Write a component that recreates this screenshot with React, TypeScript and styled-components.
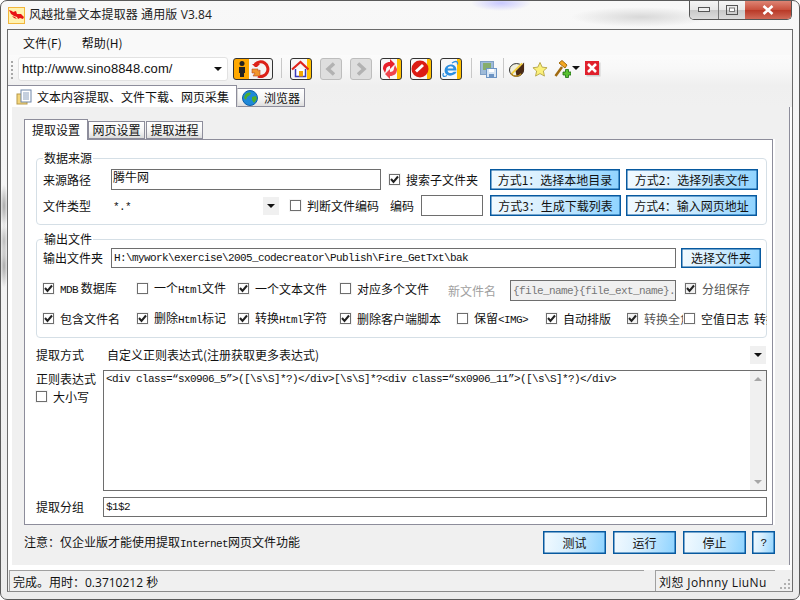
import React from 'react';
import styled, { createGlobalStyle } from 'styled-components';

const GlobalStyle = createGlobalStyle`
  html, body { margin: 0; padding: 0; background: #fff; overflow: hidden; }
  * { box-sizing: border-box; }
`;

const uiFont = `"Noto Sans CJK SC", sans-serif`;

const Win = styled.div`
  width: 800px;
  height: 600px;
  border: 1px solid #5a5a5a;
  border-radius: 7px;
  padding: 0 6px 7px 6px;
  display: flex;
  flex-direction: column;
  overflow: hidden;
  font: 12px/14px ${uiFont};
  color: #111;
  background:
    radial-gradient(ellipse 70px 10px at 640px 16px, #d8d8d8, transparent),
    radial-gradient(ellipse 30px 8px at 500px 2px, #c8c8ff, transparent),
    radial-gradient(ellipse 4px 22px at 3px 205px, #aaa, transparent),
    radial-gradient(ellipse 4px 18px at 3px 240px, #bbb, transparent),
    radial-gradient(ellipse 4px 22px at 3px 265px, #aaa, transparent),
    linear-gradient(#f8f8f8, #ececec);
`;

const TitleBar = styled.div`
  height: 28px;
  flex: none;
  display: flex;
  align-items: flex-start;
`;

const TitleText = styled.div`
  margin: 6px 0 0 4px;
  font-family: "Open Sans", ${uiFont};
  letter-spacing: 0.1px;
  color: #222;
  line-height: 16px;
`;

const WinControls = styled.div`
  margin-left: auto;
  display: flex;
  height: 20px;
  border: 1px solid #555;
  border-top: none;
  border-radius: 0 0 5px 5px;
  overflow: hidden;
  margin-top: -1px;
  margin-right: 1px;
`;

const WinBtn = styled.div<{ $w: number; $close?: boolean }>`
  width: ${(p) => p.$w}px;
  display: flex;
  align-items: center;
  justify-content: center;
  border-left: ${(p) => (p.$close ? 'none' : '1px solid #777')};
  background: ${(p) =>
    p.$close
      ? 'linear-gradient(#e08a7a, #c9523f 50%, #b93a28 55%, #d06a58)'
      : 'linear-gradient(#f6f6f6, #e8e8e8 50%, #c9c9c9 55%, #dcdcdc)'};
  &:first-child { border-left: none; }
`;

const Client = styled.div`
  flex: 1;
  min-height: 0;
  border: 1px solid #6b6b6b;
  border-bottom-color: #8a8a8a;
  background: #fff;
  display: flex;
  flex-direction: column;
`;

const MenuBar = styled.div`
  height: 25px;
  flex: none;
  display: flex;
  align-items: center;
  gap: 20px;
  padding: 1px 0 0 15px;
  background: #f9f9f9;
`;

const ToolBar = styled.div`
  height: 30px;
  flex: none;
  display: flex;
  align-items: flex-start;
  padding-top: 3px;
  background: linear-gradient(#fbfbfb, #f8f8f8 45%, #efefef);
`;

const Grip = styled.div`
  width: 2px;
  height: 20px;
  margin: 3px 5px 0 3px;
  background: repeating-linear-gradient(#a8a8a8 0 2px, transparent 2px 4px);
`;

const UrlBox = styled.div`
  width: 210px;
  height: 24px;
  margin-top: -1px;
  display: flex;
  align-items: center;
  justify-content: space-between;
  padding: 0 5px 0 3px;
  background: #fff;
  border: 1px solid #e2e2e2;
  border-radius: 3px;
  font: 13px/16px "Liberation Sans", sans-serif;
  letter-spacing: 0.1px;
  color: #111;
`;

const DownCaret = styled.i<{ $c?: string }>`
  display: block;
  flex: none;
  width: 0;
  height: 0;
  border-style: solid;
  border-color: ${(p) => p.$c ?? '#111'} transparent transparent transparent;
  border-width: 4px 4px 0 4px;
`;

const HammerCaret = styled(DownCaret)`
  margin: 0 0 2px 1px;
`;

const ToolBtn = styled.div<{ $w?: number; $ml: number; $off?: boolean; $bg?: string }>`
  width: ${(p) => p.$w ?? 22}px;
  height: 22px;
  margin-left: ${(p) => p.$ml}px;
  flex: none;
  display: flex;
  align-items: center;
  justify-content: center;
  border: 1px solid ${(p) => (p.$off ? '#bdbdbd' : '#333')};
  border-radius: 3px;
  background: ${(p) => p.$bg ?? (p.$off ? '#dedede' : 'linear-gradient(to left, #ffc000 4px, #f7f7f7 4px)')};
`;

const ToolSep = styled.div<{ $ml: number }>`
  width: 1px;
  height: 20px;
  margin-left: ${(p) => p.$ml}px;
  background: #c8c8c8;
  flex: none;
`;

const ToolIcon = styled.div<{ $ml: number; $w?: number }>`
  width: ${(p) => p.$w ?? 16}px;
  height: 22px;
  margin-left: ${(p) => p.$ml}px;
  flex: none;
  display: flex;
  align-items: center;
`;

const TabStrip = styled.div`
  height: 22px;
  flex: none;
  display: flex;
  align-items: flex-end;
  background: linear-gradient(#efefef, #f0f0f0);
  position: relative;
  z-index: 1;
`;

const MainTab = styled.div<{ $on?: boolean }>`
  display: flex;
  align-items: center;
  height: ${(p) => (p.$on ? 22 : 19)}px;
  padding: ${(p) => (p.$on ? '0 7px 0 8px' : '0 4px 0 4px')};
  gap: ${(p) => (p.$on ? 5 : 6)}px;
  border: 1px solid #8d8d9b;
  border-bottom: ${(p) => (p.$on ? 'none' : '1px solid #8d8d9b')};
  border-left: ${(p) => (p.$on ? 'none' : '1px solid #d8d8d8')};
  background: ${(p) => (p.$on ? '#fff' : 'linear-gradient(#fff, #f4f4f4 60%, #dedede)')};
  white-space: nowrap;
`;

const PageWrap = styled.div`
  flex: none;
  height: 459px;
  padding-left: 4px;
  padding-right: 2px;
  background: #fff;
`;

const MainPage = styled.div`
  height: 100%;
  padding: 12px 14px 0 12px;
  background: #f0f0f0;
  border-top: 1px solid #8d8d9b;
  border-right: 1px solid #8d8d9b;
  margin-top: -1px;
`;

const SubTabs = styled.div`
  display: flex;
  align-items: flex-end;
  height: 20px;
  position: relative;
  z-index: 1;
  margin-right: 2px;
`;

const SubTab = styled.div<{ $on?: boolean; $w: number }>`
  width: ${(p) => p.$w}px;
  height: ${(p) => (p.$on ? 21 : 18)}px;
  margin-bottom: ${(p) => (p.$on ? -1 : 0)}px;
  display: flex;
  align-items: center;
  justify-content: center;
  border: 1px solid #8d8d9b;
  border-bottom: ${(p) => (p.$on ? 'none' : '1px solid #8d8d9b')};
  background: ${(p) => (p.$on ? '#fff' : 'linear-gradient(#fff, #f4f4f4 60%, #dcdcdc)')};
  margin-right: ${(p) => (p.$on ? 0 : 1)}px;
`;

const SubPage = styled.div`
  height: 386px;
  margin-right: 2px;
  padding: 11px 5px 0 11px;
  background: #fff;
  border: 1px solid #8d8d9b;
  box-shadow: 2px 0 0 #fff;
`;

const Group = styled.fieldset<{ $mt?: number }>`
  margin: ${(p) => p.$mt ?? 0}px 0 0 0;
  padding: ${(p) => (p.$mt ? '2px 5px 8px 6px' : '4px 5px 8px 6px')};
  border: 1px solid #d5dfe6;
  border-radius: 4px;
  min-width: 0;
`;

const Legend = styled.legend`
  margin-left: 0;
  padding: 0 1px;
  line-height: 14px;
`;

const Row = styled.div<{ $h: number; $mt?: number; $top?: boolean }>`
  display: flex;
  height: ${(p) => p.$h}px;
  margin-top: ${(p) => p.$mt ?? 0}px;
  align-items: ${(p) => (p.$top ? 'flex-start' : 'center')};
  white-space: nowrap;
`;

const Label = styled.div<{ $w: number; $grey?: boolean; $mid?: boolean; $clip?: boolean }>`
  width: ${(p) => p.$w}px;
  flex: none;
  color: ${(p) => (p.$grey ? '#a0a0a0' : '#111')};
  align-self: ${(p) => (p.$mid ? 'center' : 'auto')};
  overflow: ${(p) => (p.$clip ? 'hidden' : 'visible')};
`;

const Field = styled.div<{ $w?: number; $grey?: boolean; $top?: boolean; $fill?: boolean }>`
  width: ${(p) => (p.$w ? `${p.$w}px` : 'auto')};
  height: 100%;
  flex: ${(p) => (p.$fill ? 1 : 'none')};
  display: flex;
  align-items: ${(p) => (p.$top ? 'flex-start' : 'center')};
  padding: ${(p) => (p.$top ? '0 1px' : '0 2px')};
  border: 1px solid #6e6e6e;
  background: ${(p) => (p.$grey ? '#f0f0f0' : '#fff')};
  color: ${(p) => (p.$grey ? '#777' : '#111')};
`;

const Mono = styled.span`
  font: 11px/14px "Liberation Mono", monospace;
  letter-spacing: -0.6px;
`;

const Check = styled.div<{ $w?: number; $ml?: number; $clip?: boolean }>`
  width: ${(p) => p.$w ?? 94}px;
  height: 17px;
  margin-left: ${(p) => p.$ml ?? 0}px;
  flex: none;
  display: flex;
  align-items: center;
  gap: 6px;
  overflow: ${(p) => (p.$clip ? 'hidden' : 'visible')};
`;

const Box = styled.span<{ $muted?: boolean }>`
  width: 11px;
  height: 11px;
  flex: none;
  display: flex;
  align-items: center;
  justify-content: center;
  border: 1px solid #6e6e6e;
  background: ${(p) => (p.$muted ? '#f2f2f2' : '#fff')};
  box-shadow: 0 0 0 1px #f4f4f4;
`;

const CheckText = styled.span<{ $grey?: boolean }>`
  color: ${(p) => (p.$grey ? '#555' : '#111')};
`;

const BlueBtn = styled.div<{ $w: number; $ml?: number; $h?: number }>`
  width: ${(p) => p.$w}px;
  height: ${(p) => p.$h ?? 21}px;
  margin-left: ${(p) => p.$ml ?? 0}px;
  flex: none;
  display: flex;
  align-items: center;
  justify-content: center;
  border: 1px solid #07599f;
  box-shadow: inset 0 0 0 0.5px #07599f;
  background: linear-gradient(100deg, #f2faff, #d8effe 40%, #8ed3ff);
  color: #111;
`;

const ComboArrow = styled.div`
  width: 16px;
  height: 18px;
  flex: none;
  display: flex;
  align-items: center;
  justify-content: center;
  background: #f0f0f0;
`;

const RegexRow = styled.div`
  display: flex;
  height: 121px;
  margin-top: 6px;
`;

const RegexSide = styled.div`
  width: 67px;
  flex: none;
  padding-top: 2px;
  display: flex;
  flex-direction: column;
  gap: 2px;
`;

const RegexBox = styled.div`
  flex: 1;
  display: flex;
  justify-content: space-between;
  border: 1px solid #6e6e6e;
  padding: 1px 0 0 2px;
  min-width: 0;
`;

const ScrollBar = styled.div`
  width: 16px;
  flex: none;
  margin-top: -1px;
  display: flex;
  flex-direction: column;
  justify-content: space-between;
  align-items: center;
  background: #f0f0f0;
  padding: 6px 0;
`;

const ScrollUp = styled.i`
  display: block;
  width: 0;
  height: 0;
  border-left: 4px solid transparent;
  border-right: 4px solid transparent;
  border-bottom: 4px solid #a6a6a6;
`;

const ScrollDown = styled(ScrollUp)`
  border-bottom: none;
  border-top: 4px solid #a6a6a6;
`;

const Footer = styled.div`
  display: flex;
  align-items: center;
  height: 23px;
  margin-top: 6px;
`;

const Note = styled.div`
  flex: 1;
`;

const StatusGap = styled.div`
  height: 4px;
  flex: none;
  background: #fff;
`;

const StatusBar = styled.div`
  flex: 1;
  display: flex;
  background: #f0f0f0;
  padding-left: 1px;
  font-family: "Open Sans", ${uiFont};
`;

const StatusCell = styled.div<{ $w: number; $ml?: number; $wide?: boolean }>`
  width: ${(p) => p.$w}px;
  margin-left: ${(p) => p.$ml ?? 0}px;
  flex: none;
  display: flex;
  align-items: center;
  padding: 3px 0 0 3px;
  border-top: 1px solid #a0a0a0;
  border-left: 1px solid #a0a0a0;
  white-space: nowrap;
  letter-spacing: ${(p) => (p.$wide ? 0.4 : 0)}px;
`;

const SizeGrip = styled.svg`
  margin: auto 1px 1px auto;
`;

const AppIconSvg = styled.svg`
  margin: 6px 0 0 1px;
  flex: none;
`;

const GlyphSvg = styled.svg<{ $mr?: number }>`
  margin-right: ${(p) => p.$mr ?? 0}px;
  flex: none;
`;

const Tick = () => (
  <svg width="9" height="9" viewBox="0 0 9 9">
    <path d="M1 4 L3.5 7 L8 1.5" fill="none" stroke="#222" strokeWidth="2" />
  </svg>
);

const CheckItem = ({ on, w, ml, muted, clip, children }: { on?: boolean; w?: number; ml?: number; muted?: boolean; clip?: boolean; children: React.ReactNode }) => (
  <Check $w={w} $ml={ml} $clip={clip}>
    <Box $muted={muted}>{on && <Tick />}</Box>
    <CheckText $grey={muted}>{children}</CheckText>
  </Check>
);

const AppIcon = () => (
  <AppIconSvg width="17" height="17" viewBox="0 0 17 17">
    <rect x="0.5" y="0.5" width="16" height="16" fill="#fff2b0" stroke="#f2b63c" />
    <path d="M1 3l3 1 1 1 3-1 1 3 4 0 3 3-1 2-3-1-2 1-1-2-3-1-3-2-1-2z" fill="#e81414" />
    <path d="M4 9l3 1 2 2-3-1z" fill="#e81414" />
  </AppIconSvg>
);

const PageIcon = () => (
  <svg width="16" height="16" viewBox="0 0 16 16">
    <rect x="1" y="5" width="10" height="10" fill="#f4d67c" stroke="#b89a4a" />
    <rect x="5" y="1" width="10" height="12" fill="#fff" stroke="#6f86a8" />
    <path d="M7 4h6M7 6h6M7 8h6M7 10h6" stroke="#8aa0be" />
  </svg>
);

const GlobeIcon = () => (
  <svg width="16" height="16" viewBox="0 0 16 16">
    <circle cx="8" cy="8" r="7.5" fill="#1e88d8" />
    <path d="M3 5c2-3 5-3 6-2l-1 2-3 2-1 3-2-2zM10 7l4-1 1 3-3 4-2-3z" fill="#4cae2c" />
    <circle cx="8" cy="8" r="7.5" fill="none" stroke="#0d5fa8" />
  </svg>
);

const Person = () => (
  <svg width="14" height="18" viewBox="0 0 14 18">
    <circle cx="7" cy="3.5" r="2.5" fill="#222" />
    <path d="M4 7h6v6H9v4H5v-4H4z" fill="#222" />
  </svg>
);

const Reload = () => (
  <svg width="22" height="20" viewBox="0 0 22 20">
    <path d="M6 5.500A7.300 7.300 0 1 1 9 17" fill="none" stroke="#dc2018" strokeWidth="3" />
    <path d="M3 5h8l-3 3H6z" fill="#dc2018" />
    <path d="M3 10h6v2l2-1v6H4l2-3H3z" fill="#f0962c" stroke="#b8481c" strokeWidth="0.600" />
  </svg>
);

const HomeGlyph = () => (
  <GlyphSvg $mr={3} width="18" height="18" viewBox="0 0 18 18">
    <path d="M4.500 9v7.500h10V9" fill="#fff" stroke="#3a3ab8" strokeWidth="1.500" />
    <rect x="8" y="11" width="4" height="5.500" fill="#f2a500" />
    <path d="M1 9.500l8.500-7.500 8 7.500" fill="none" stroke="#e0241c" strokeWidth="2.200" />
  </GlyphSvg>
);

const Chevron = ({ left }: { left?: boolean }) => (
  <svg width="12" height="14" viewBox="0 0 12 14">
    <path d={left ? 'M9 1.500L3 7l6 5.500' : 'M3 1.500L9 7l-6 5.500'} fill="none" stroke="#b2b2b2" strokeWidth="3.500" />
  </svg>
);

const RefreshGlyph = () => (
  <GlyphSvg $mr={3} width="18" height="20" viewBox="0 0 18 20">
    <path d="M2 10c0-5 3-7 7-7V0l5 5-5 5V7C7 7 5 8 5 11l-1 3z" fill="#e8202a" />
    <path d="M16 10c0 5-3 7-7 7v3l-5-5 5-5v3c2 0 4-1 4-4l1-3z" fill="#f0444c" />
  </GlyphSvg>
);

const StopGlyph = () => (
  <GlyphSvg $mr={2} width="18" height="18" viewBox="0 0 18 18">
    <circle cx="9" cy="9" r="8.500" fill="#dc1c14" />
    <path d="M5 11.500L12 5" stroke="#fff" strokeWidth="3" />
  </GlyphSvg>
);

const IeGlyph = () => (
  <GlyphSvg $mr={3} width="18" height="18" viewBox="0 0 18 18">
    <path d="M13.500 10.500H6.500c.3 2.800 4 3.500 6.300 1.300h2.800C14 16 7 17 4.500 13.500 2.500 10.500 4 5 9.500 4.500c4-.2 6 2.500 6 6zM6.600 8.500h5.800C12.200 5.600 7.200 5.600 6.600 8.500z" fill="#2b8fe0" />
    <path d="M2.500 13C1 16 2.500 17.500 6 15.500M11 3c3-2 6-2.500 5.500 1.500" fill="none" stroke="#2b8fe0" strokeWidth="1.300" />
  </GlyphSvg>
);

const SaveIcon = () => (
  <svg width="17" height="17" viewBox="0 0 17 17">
    <rect x="0.500" y="0.500" width="13" height="13" fill="#9fbbd8" stroke="#7f9fc4" />
    <rect x="3" y="2" width="8" height="7" fill="#86ad6c" />
    <rect x="6.500" y="7.500" width="10" height="9" fill="#d8e6f4" stroke="#6c94c4" />
    <rect x="9" y="8" width="5" height="3" fill="#fff" />
    <rect x="9" y="13" width="5" height="3" fill="#6c94c4" />
  </svg>
);

const PaletteIcon = () => (
  <svg width="17" height="18" viewBox="0 0 17 18">
    <ellipse cx="8" cy="10" rx="7.500" ry="6.800" fill="#efeedd" stroke="#222" />
    <path d="M7 11L16 2v8c-1 4-4 6.500-8 6.500z" fill="#4a2a14" />
    <path d="M3 14L14 3" stroke="#f4d040" strokeWidth="2" />
    <path d="M2 14c3 3.500 8 3.500 11 0" fill="none" stroke="#b8891c" strokeWidth="1.500" />
  </svg>
);

const StarIcon = () => (
  <svg width="17" height="17" viewBox="0 0 17 17">
    <path d="M8.500 1l2.300 5 5.200.6-3.900 3.500 1.100 5.400-4.700-2.700-4.700 2.700 1.100-5.400L1 6.600l5.200-.6z" fill="#fbf07a" stroke="#b8a848" />
  </svg>
);

const HammerIcon = () => (
  <svg width="17" height="18" viewBox="0 0 17 18">
    <path d="M1.500 16L8 7" stroke="#a06a10" strokeWidth="2.500" />
    <path d="M5 3l3-2.500 5 4.500-2 3z" fill="#f4a820" stroke="#a06a10" />
    <path d="M9 12h2.500V9.500h3V12H17v3h-2.500v2.500h-3V15H9z" fill="#58c030" stroke="#1c6a10" strokeWidth="0.800" />
  </svg>
);

const CloseIcon = () => (
  <svg width="16" height="16" viewBox="0 0 16 16">
    <rect x="1.500" y="1.500" width="14" height="14" fill="#cfcfcf" />
    <rect x="0" y="0" width="14" height="14" fill="#e0202c" />
    <path d="M3 3l8 8M11 3l-8 8" stroke="#fff" strokeWidth="2.500" />
  </svg>
);

const regex = '<div class=“sx0906_5”>([\\s\\S]*?)</div>[\\s\\S]*?<div class=“sx0906_11”>([\\s\\S]*?)</div>';

export default function App() {
  return (
    <>
      <GlobalStyle />
      <Win>
        <TitleBar>
          <AppIcon />
          <TitleText>风越批量文本提取器 通用版 V3.84</TitleText>
          <WinControls>
            <WinBtn $w={28}>
              <svg width="12" height="6" viewBox="0 0 12 6"><rect x="0.500" y="0.500" width="11" height="4" fill="#eee" stroke="#555" /></svg>
            </WinBtn>
            <WinBtn $w={27}>
              <svg width="12" height="10" viewBox="0 0 12 10"><rect x="0.500" y="0.500" width="11" height="9" fill="none" stroke="#555" /><rect x="3.500" y="3" width="5" height="3.500" fill="#fff" stroke="#777" /></svg>
            </WinBtn>
            <WinBtn $w={46} $close>
              <svg width="12" height="10" viewBox="0 0 12 10"><path d="M1.500 1l9 8M10.500 1l-9 8" stroke="#fff" strokeWidth="2.600" /></svg>
            </WinBtn>
          </WinControls>
        </TitleBar>
        <Client>
          <MenuBar>
            <span>文件(F)</span>
            <span>帮助(H)</span>
          </MenuBar>
          <ToolBar>
            <Grip />
            <UrlBox>
              <span>http://www.sino8848.com/</span>
              <DownCaret />
            </UrlBox>
            <ToolBtn $w={40} $ml={5} $bg="linear-gradient(to right, #ffa800 15px, #f4f4f4 15px)">
              <Person />
              <Reload />
            </ToolBtn>
            <ToolSep $ml={8} />
            <ToolBtn $ml={8}><HomeGlyph /></ToolBtn>
            <ToolBtn $ml={8} $off><Chevron left /></ToolBtn>
            <ToolBtn $ml={8} $off><Chevron /></ToolBtn>
            <ToolBtn $ml={8}><RefreshGlyph /></ToolBtn>
            <ToolBtn $ml={8}><StopGlyph /></ToolBtn>
            <ToolBtn $ml={8}><IeGlyph /></ToolBtn>
            <ToolSep $ml={9} />
            <ToolIcon $ml={8} $w={18}><SaveIcon /></ToolIcon>
            <ToolSep $ml={5} />
            <ToolIcon $ml={5}><PaletteIcon /></ToolIcon>
            <ToolIcon $ml={7}><StarIcon /></ToolIcon>
            <ToolIcon $ml={6} $w={26}>
              <HammerIcon />
              <HammerCaret />
            </ToolIcon>
            <ToolIcon $ml={5}><CloseIcon /></ToolIcon>
          </ToolBar>
          <TabStrip>
            <MainTab $on><PageIcon /><span>文本内容提取、文件下载、网页采集</span></MainTab>
            <MainTab><GlobeIcon /><span>浏览器</span></MainTab>
          </TabStrip>
          <PageWrap>
            <MainPage>
              <SubTabs>
                <SubTab $on $w={64}>提取设置</SubTab>
                <SubTab $w={57}>网页设置</SubTab>
                <SubTab $w={57}>提取进程</SubTab>
              </SubTabs>
              <SubPage>
                <Group>
                  <Legend>数据来源</Legend>
                  <Row $h={21}>
                    <Label $w={68}>来源路径</Label>
                    <Field $w={270} $top>腾牛网</Field>
                    <CheckItem on w={92} ml={8}>搜索子文件夹</CheckItem>
                    <BlueBtn $w={130} $ml={9}>方式1：选择本地目录</BlueBtn>
                    <BlueBtn $w={132} $ml={6}>方式2：选择列表文件</BlueBtn>
                  </Row>
                  <Row $h={21} $mt={5}>
                    <Label $w={70}>文件类型</Label>
                    <Label $w={150}><Mono>*.*</Mono></Label>
                    <ComboArrow><DownCaret /></ComboArrow>
                    <CheckItem w={100} ml={11}>判断文件编码</CheckItem>
                    <Label $w={31}>编码</Label>
                    <Field $w={62} />
                    <BlueBtn $w={131} $ml={7}>方式3：生成下载列表</BlueBtn>
                    <BlueBtn $w={131} $ml={5}>方式4：输入网页地址</BlueBtn>
                  </Row>
                </Group>
                <Group $mt={7}>
                  <Legend>输出文件</Legend>
                  <Row $h={20}>
                    <Label $w={68}>输出文件夹</Label>
                    <Field $w={565}><Mono>H:\mywork\exercise\2005_codecreator\Publish\Fire_GetTxt\bak</Mono></Field>
                    <BlueBtn $w={80} $ml={5} $h={20}>选择文件夹</BlueBtn>
                  </Row>
                  <Row $h={21} $mt={12} $top>
                    <CheckItem on w={94}><Mono>MDB</Mono> 数据库</CheckItem>
                    <CheckItem w={101}>一个<Mono>Html</Mono>文件</CheckItem>
                    <CheckItem on w={102}>一个文本文件</CheckItem>
                    <CheckItem w={108}>对应多个文件</CheckItem>
                    <Label $w={62} $grey $mid>新文件名</Label>
                    <Field $w={166} $grey><Mono>{'{file_name}{file_ext_name}.'}</Mono></Field>
                    <CheckItem on muted w={70} ml={9}>分组保存</CheckItem>
                  </Row>
                  <Row $h={21} $mt={7}>
                    <CheckItem on w={94}>包含文件名</CheckItem>
                    <CheckItem on w={101}>删除<Mono>Html</Mono>标记</CheckItem>
                    <CheckItem on w={102}>转换<Mono>Html</Mono>字符</CheckItem>
                    <CheckItem on w={117}>删除客户端脚本</CheckItem>
                    <CheckItem w={89}>保留<Mono>&lt;IMG&gt;</Mono></CheckItem>
                    <CheckItem on w={81}>自动排版</CheckItem>
                    <CheckItem on muted clip w={57}>转换全角</CheckItem>
                    <CheckItem w={70}>空值日志</CheckItem>
                    <Label $w={13} $clip>转换</Label>
                  </Row>
                </Group>
                <Row $h={18} $mt={8}>
                  <Label $w={71}>提取方式</Label>
                  <Label $w={643}>自定义正则表达式(注册获取更多表达式)</Label>
                  <ComboArrow><DownCaret /></ComboArrow>
                </Row>
                <RegexRow>
                  <RegexSide>
                    <span>正则表达式</span>
                    <CheckItem w={60}>大小写</CheckItem>
                  </RegexSide>
                  <RegexBox>
                    <Mono>{regex}</Mono>
                    <ScrollBar><ScrollUp /><ScrollDown /></ScrollBar>
                  </RegexBox>
                </RegexRow>
                <Row $h={20} $mt={6}>
                  <Label $w={67}>提取分组</Label>
                  <Field $fill><Mono>$1$2</Mono></Field>
                </Row>
              </SubPage>
              <Footer>
                <Note>注意：仅企业版才能使用提取<Mono>Internet</Mono>网页文件功能</Note>
                <BlueBtn $w={63} $h={23}>测试</BlueBtn>
                <BlueBtn $w={63} $h={23} $ml={7}>运行</BlueBtn>
                <BlueBtn $w={63} $h={23} $ml={7}>停止</BlueBtn>
                <BlueBtn $w={23} $h={23} $ml={6}><Mono>?</Mono></BlueBtn>
              </Footer>
            </MainPage>
          </PageWrap>
          <StatusGap />
          <StatusBar>
            <StatusCell $w={635}>完成。用时：0.3710212 秒</StatusCell>
            <StatusCell $w={120} $ml={11} $wide>刘恕 Johnny LiuNu</StatusCell>
            <SizeGrip width="12" height="12" viewBox="0 0 12 12">
              <path d="M9 1h2v2H9zM5 5h2v2H5zM9 5h2v2H9zM1 9h2v2H1zM5 9h2v2H5zM9 9h2v2H9z" fill="#b0b0b0" />
            </SizeGrip>
          </StatusBar>
        </Client>
      </Win>
    </>
  );
}
